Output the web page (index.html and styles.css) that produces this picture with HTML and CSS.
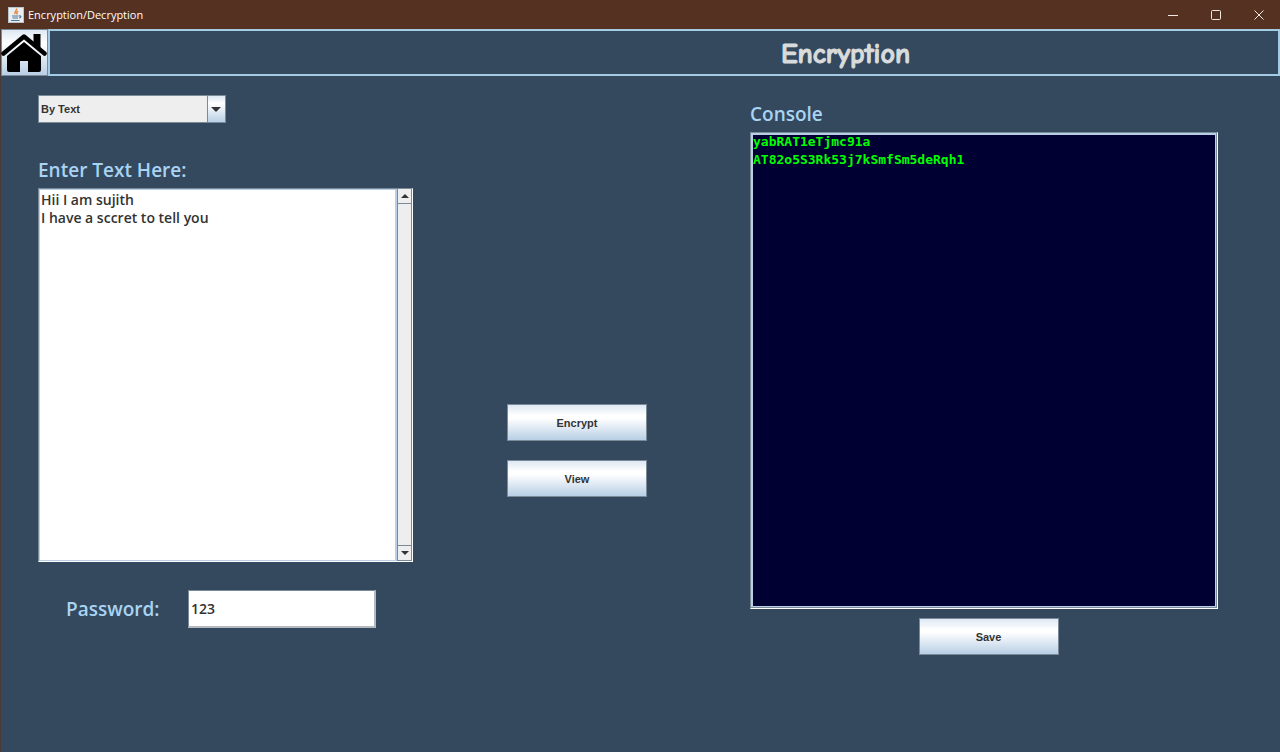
FILE: index.html
```html
<!DOCTYPE html>
<html lang="en">
<head>
<meta charset="utf-8">
<title>Encryption/Decryption</title>
<link rel="stylesheet" href="styles.css">
</head>
<body>
<header class="titlebar">
  <svg class="app-icon" viewBox="0 0 16 16" aria-hidden="true">
    <rect x="0.5" y="0.5" width="15" height="15" fill="#e9eef3" stroke="#b9c4cd"/>
    <path d="M8.500 1.500c1 2-3 3-1.200 5.500M10 4c-2 1.200-1.500 2-.8 3.500" fill="none" stroke="#e8833a" stroke-width="1.400"/>
    <path d="M4 9h6.500M4.500 11h5.500M3 13.500h8.500M11 9c2.500-.6 2.500 2 0 2" fill="none" stroke="#4f7695" stroke-width="1.200"/>
  </svg>
  <span class="app-name">Encryption/Decryption</span>
  <div class="window-controls">
    <button type="button" class="win-btn" aria-label="Minimize"><svg viewBox="0 0 10 10"><path d="M0 5.500h10"/></svg></button>
    <button type="button" class="win-btn" aria-label="Maximize"><svg viewBox="0 0 10 10"><rect x="0.5" y="0.5" width="9" height="9" rx="1"/></svg></button>
    <button type="button" class="win-btn" aria-label="Close"><svg viewBox="0 0 10 10"><path d="M0.500 0.500l9 9M9.500 0.500l-9 9"/></svg></button>
  </div>
</header>
<div class="frame">
  <div class="banner">
    <button type="button" class="home" aria-label="Home">
      <svg viewBox="0 0 46 44"><path d="M32.500 3h7v16l-7-6z"/><path d="M2.500 22.500L23 5.500l20.500 17" fill="none" stroke="#000" stroke-width="4.500" stroke-linecap="round" stroke-linejoin="round"/><path d="M6 25L23 11l17 14v14q0 2-2 2H27V30h-8v11H8q-2 0-2-2z"/></svg>
    </button>
    <div class="heading"><h1>Encryption</h1></div>
  </div>
  <main class="content">
    <section class="source">
      <div class="combo">
        <select aria-label="Input type"><option>By Text</option></select>
        <span class="combo-arrow"><svg viewBox="0 0 10 5"><path d="M0 0h10L5 5z"/></svg></span>
      </div>
      <label class="caption" for="plain">Enter Text Here:</label>
      <div class="text-pane">
        <textarea id="plain" spellcheck="false">Hii I am sujith
I have a sccret to tell you</textarea>
        <div class="scrollbar">
          <button type="button" aria-label="Scroll up"><svg viewBox="0 0 8 4"><path d="M0 4h8L4 0z"/></svg></button>
          <button type="button" aria-label="Scroll down"><svg viewBox="0 0 8 4"><path d="M0 0h8L4 4z"/></svg></button>
        </div>
      </div>
      <div class="password">
        <label class="caption" for="pass">Password:</label>
        <input id="pass" type="text" value="123">
      </div>
    </section>
    <div class="actions">
      <button type="button" class="metal">Encrypt</button>
      <button type="button" class="metal">View</button>
    </div>
    <section class="result">
      <label class="caption" for="console">Console</label>
      <textarea id="console" class="console" spellcheck="false" readonly>yabRAT1eTjmc91a
AT82o5S3Rk53j7kSmfSm5deRqh1</textarea>
      <button type="button" class="metal">Save</button>
    </section>
  </main>
</div>
</body>
</html>
```
FILE: styles.css
```css
* { box-sizing: border-box; }
body {
  margin: 0;
  min-height: 100vh;
  display: flex;
  flex-direction: column;
  background: #34495e;
  color: #333;
  font-family: "Liberation Sans", Arial, sans-serif;
}
button { font: inherit; color: inherit; padding: 0; }
svg { display: block; }
.titlebar {
  display: flex;
  align-items: center;
  height: 29px;
  padding-left: 8px;
  background: #553122;
  color: #fff;
}
.app-icon { width: 16px; height: 16px; }
.app-name { margin-left: 4px; font: 11px "Open Sans", sans-serif; }
.window-controls { display: flex; margin-left: auto; }
.win-btn {
  display: grid;
  place-items: center;
  width: 43px;
  height: 28px;
  border: 0;
  background: none;
}
.win-btn svg { width: 10px; height: 10px; fill: none; stroke: #f3e9e3; }
.frame { flex: 1; border-left: 1px solid #4b3a38; }
.banner { display: flex; height: 47px; }
.home {
  width: 47px;
  border: 1px solid #7a8a99;
  background: linear-gradient(#dde8f3, #fff 30%, #b8cfe5);
}
.home svg { width: 46px; height: 44px; margin-left: -1px; }
.heading {
  flex: 1;
  display: flex;
  align-items: center;
  justify-content: center;
  padding: 3px 0 0 363px;
  border: 2px solid #a3cbe4;
}
h1 {
  margin: 0;
  color: #d9dcdc;
  font: bold 28px/40px "Comic Sans MS", "Comic Neue", "Open Sans", sans-serif;
  -webkit-text-stroke: 1px #d9dcdc;
}
.content {
  display: grid;
  grid-template-columns: 375fr 149fr 468fr;
  column-gap: 94px;
  padding: 19px 62px 20px 37px;
}
.caption {
  color: #a9d3f3;
  font: 600 19px/26px "Trebuchet MS", "Open Sans", sans-serif;
}
.source { display: flex; flex-direction: column; }
.source > .caption { margin: 34px 0 5px; }
.combo { display: flex; width: 50%; height: 28px; border: 1px solid #7a8a99; }
.combo select {
  flex: 1;
  min-width: 0;
  padding: 0 2px;
  border: 0;
  appearance: none;
  background: #eee;
  color: #333;
  font: bold 11px "Liberation Sans", Arial, sans-serif;
}
.combo-arrow {
  display: grid;
  place-items: center;
  width: 18px;
  border-left: 1px solid #7a8a99;
  background: linear-gradient(#dde8f3, #fff 30%, #b8cfe5);
}
.combo-arrow svg { width: 10px; height: 5px; fill: #333; }
.text-pane {
  display: flex;
  height: 374px;
  border: 1px solid #7a8a99;
  border-right-color: #fff;
  border-bottom-color: #fff;
  background: #fff;
}
textarea { resize: none; outline: 0; overflow: hidden; }
.text-pane textarea {
  flex: 1;
  min-width: 0;
  padding: 1px;
  border: 1px solid #b8cfe5;
  border-right-width: 2px;
  background: #fff;
  color: #333;
  font: 600 14px/18px "Trebuchet MS", "Open Sans", sans-serif;
}
.scrollbar {
  display: flex;
  flex-direction: column;
  justify-content: space-between;
  width: 15px;
  border: 1px solid #7a8a99;
  border-top: 0;
  background: #eee;
}
.scrollbar button {
  display: grid;
  place-items: center;
  height: 15px;
  border: 0;
  border-bottom: 1px solid #7a8a99;
  background: #eee;
}
.scrollbar button:last-child { border-top: 1px solid #7a8a99; border-bottom: 0; }
.scrollbar svg { width: 8px; height: 4px; fill: #333; }
.password {
  display: flex;
  align-items: center;
  margin-top: 28px;
  padding-left: 28px;
}
.password .caption { width: 122px; }
.password input {
  width: 188px;
  height: 38px;
  padding: 0 2px;
  border: 1px solid #7a8a99;
  border-right: 2px solid #b4bac0;
  border-bottom: 2px solid #b4bac0;
  background: #fff;
  color: #333;
  font: 600 14px "Trebuchet MS", "Open Sans", sans-serif;
}
.metal {
  width: 140px;
  height: 37px;
  border: 1px solid #7a8a99;
  background: linear-gradient(#dde8f3, #fff 30%, #fff 38%, #b8cfe5);
  font-weight: bold;
  font-size: 11px;
}
.actions {
  display: flex;
  flex-direction: column;
  align-items: flex-start;
  gap: 19px;
  padding-top: 309px;
}
.result { display: flex; flex-direction: column; padding-top: 6px; }
.console {
  height: 477px;
  margin: 5px 0 9px;
  padding: 0 2px;
  border: 1px solid #7a8a99;
  border-right-color: #fff;
  border-bottom-color: #fff;
  box-shadow: inset -1px -1px #7a8a99, inset 0 0 0 2px #b8cfe5;
  background: #003;
  color: #0f0;
  font: bold 13px/18px "DejaVu Sans Mono", monospace;
}
.result .metal { align-self: center; margin-left: 9px; }
```
